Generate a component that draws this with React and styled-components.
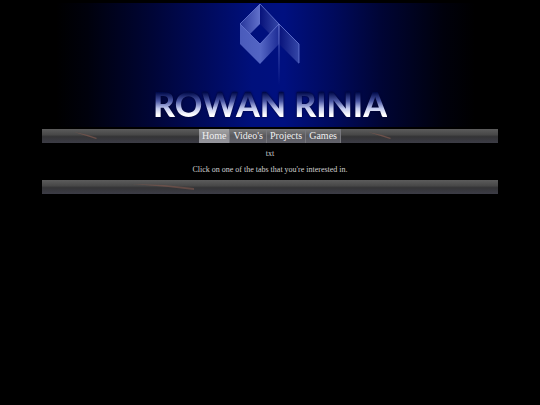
import React, { useState } from "react";
import styled, { createGlobalStyle } from "styled-components";

const GlobalStyle = createGlobalStyle`
  body {
    margin: 0;
    background: #000;
    color: #d0d0d0;
    font-family: "Liberation Serif", "Times New Roman", serif;
    font-size: 8px;
  }
`;

const Page = styled.div`
  padding: 3px 42px 0;
`;

const Banner = styled.header`
  display: flex;
  flex-direction: column;
  align-items: center;
  height: 124px;
  margin-bottom: 2px;
  background: linear-gradient(
    90deg,
    #000 3%,
    #00010c 10%,
    #000536 24%,
    #000a5c 36%,
    #00107c 46%,
    #001080 53%,
    #000a5c 64%,
    #000536 74%,
    #00010c 88%,
    #000 95%
  );
`;

const Logo = styled.svg`
  flex: none;
  width: 60px;
  height: 83px;
`;

const Title = styled.h1`
  margin: 0;
  font-family: Lato, sans-serif;
  font-size: 34px;
  font-weight: 900;
  line-height: 36px;
  white-space: nowrap;
  color: transparent;
  background: linear-gradient(#000a4a 18%, #4a56a4 42%, #c0c8ee 62%, #fff 80%);
  background-clip: text;
  filter: drop-shadow(0 0 1px #000430);
`;

const Bar = styled.div`
  position: relative;
  display: flex;
  justify-content: center;
  height: 14px;
  background: linear-gradient(#5c5c5c, #484848 40%, #343436 55%, #3c3c46);
`;

const Streaks = styled.svg`
  position: absolute;
  inset: 0;
  width: 100%;
  height: 100%;
`;

const Tabs = styled.nav`
  position: relative;
  display: flex;
`;

const Tab = styled.a`
  padding: 0 3px;
  border-right: 1px solid #77777d;
  background: ${(props) =>
    props.$active
      ? "linear-gradient(#a4a4a4, #8c8c90 50%, #94949c)"
      : "linear-gradient(#7c7c7c, #58585c 50%, #62626c)"};
  color: #f0f0f0;
  font-size: 10px;
  line-height: 14px;
  text-decoration: none;
`;

const Content = styled.main`
  padding: 7px 0 6px;
  text-align: center;
`;

const Text = styled.p`
  margin: 0 0 8px;
  line-height: 8px;

  &:last-child {
    margin-bottom: 0;
  }
`;

const tabs = ["Home", "Video's", "Projects", "Games"];

const BrandLogo = () => (
  <Logo viewBox="0 0 60 83" aria-hidden="true">
    <defs>
      <linearGradient id="light">
        <stop offset="0" stopColor="#26359a" />
        <stop offset="1" stopColor="#6272cc" />
      </linearGradient>
      <linearGradient id="dark">
        <stop offset="0" stopColor="#07127a" />
        <stop offset="1" stopColor="#3547a8" />
      </linearGradient>
      <linearGradient id="front">
        <stop offset="0" stopColor="#4a5bbb" />
        <stop offset="1" stopColor="#5365c4" />
      </linearGradient>
      <linearGradient id="side">
        <stop offset="0" stopColor="#5668c6" />
        <stop offset="1" stopColor="#1c2b95" />
      </linearGradient>
      <linearGradient id="stem" x1="0" y1="0" x2="0" y2="1">
        <stop offset="0" stopColor="#7a8ae0" />
        <stop offset="1" stopColor="#7a8ae0" stopOpacity="0" />
      </linearGradient>
    </defs>
    <path d="M20 1v20L10 31 0 21z" fill="url(#light)" />
    <path d="M20 1l19 20-9 10-10-10z" fill="url(#dark)" />
    <path d="M0 21l20 20v20L0 41z" fill="url(#front)" />
    <path d="M20 41l19-20v20L20 61z" fill="url(#side)" />
    <path d="M39 21l20 20v20L39 41z" fill="url(#dark)" />
    <path
      d="M20 1L0 21l20 20 19-20zM39 21l20 20v19"
      fill="none"
      stroke="#6b7bd4"
      strokeWidth="0.8"
    />
    <path d="M38.5 21h1v61h-1z" fill="url(#stem)" />
  </Logo>
);

const App = () => {
  const [active, setActive] = useState("Home");

  return (
    <>
      <GlobalStyle />
      <Page>
        <Banner>
          <BrandLogo />
          <Title>ROWAN RINIA</Title>
        </Banner>
        <Bar>
          <Streaks aria-hidden="true">
            <g fill="#80594e">
              <path d="M32 3l14 3 9 3-1 1z" opacity="0.7" />
              <path d="M326 3l14 3 9 3-1 1z" opacity="0.7" />
            </g>
          </Streaks>
          <Tabs>
            {tabs.map((tab) => (
              <Tab
                key={tab}
                href="#"
                $active={active === tab}
                onClick={() => setActive(tab)}
              >
                {tab}
              </Tab>
            ))}
          </Tabs>
        </Bar>
        <Content>
          <Text>txt</Text>
          <Text>Click on one of the tabs that you're interested in.</Text>
        </Content>
        <Bar as="footer">
          <Streaks aria-hidden="true">
            <path d="M90 4l32 1 30 3v2l-26-3z" fill="#80594e" opacity="0.6" />
          </Streaks>
        </Bar>
      </Page>
    </>
  );
};

export default App;
